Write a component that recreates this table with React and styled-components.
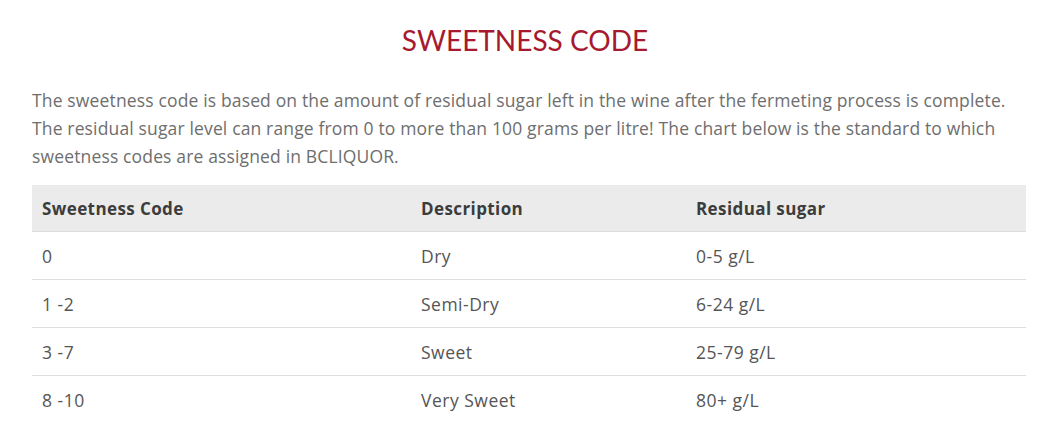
import styled, { createGlobalStyle } from "styled-components";

const GlobalStyle = createGlobalStyle`
  body {
    margin: 0;
    background: #fff;
    font-family: "Open Sans", "Lato", sans-serif;
  }
`;

const rows = [
  { code: "0", desc: "Dry", sugar: "0-5 g/L" },
  { code: "1 -2", desc: "Semi-Dry", sugar: "6-24 g/L" },
  { code: "3 -7", desc: "Sweet", sugar: "25-79 g/L" },
  { code: "8 -10", desc: "Very Sweet", sugar: "80+ g/L" },
];

function App() {
  return (
    <>
      <GlobalStyle />
      <Section>
        <Title>SWEETNESS CODE</Title>
        <Intro>
          The sweetness code is based on the amount of residual sugar left in
          the wine after the fermeting process is complete.
          <br />
          The residual sugar level can range from 0 to more than 100 grams per
          litre! The chart below is the standard to which
          <br />
          sweetness codes are assigned in BCLIQUOR.
        </Intro>
        <Table>
          <colgroup>
            <col style={{ width: 379 }} />
            <col style={{ width: 275 }} />
            <col />
          </colgroup>
          <thead>
            <tr>
              <Th>Sweetness Code</Th>
              <Th>Description</Th>
              <Th>Residual sugar</Th>
            </tr>
          </thead>
          <tbody>
            {rows.map((r, i) => (
              <Row key={r.code} $last={i === rows.length - 1}>
                <Td>{r.code}</Td>
                <Td>{r.desc}</Td>
                <Td>{r.sugar}</Td>
              </Row>
            ))}
          </tbody>
        </Table>
      </Section>
    </>
  );
}

const Section = styled.div`
  padding: 22px 28px 0 32px;
`;

const Title = styled.h2`
  margin: 0 0 28px;
  padding-right: 8px;
  text-align: center;
  font-family: "Lato", sans-serif;
  font-weight: 400;
  font-size: 28px;
  line-height: 36px;
  color: #a6192e;
`;

const Intro = styled.p`
  margin: 0 0 15px;
  font-size: 17.5px;
  letter-spacing: 0.15px;
  line-height: 28px;
  color: #6e6e6e;
  white-space: nowrap;
`;

const Table = styled.table`
  width: 994px;
  border-collapse: collapse;
  table-layout: fixed;
`;

const Th = styled.th`
  background: #ebebeb;
  height: 46px;
  padding: 0 10px;
  text-align: left;
  font-size: 17px;
  letter-spacing: 0.4px;
  font-weight: 700;
  color: #3c3c3c;
  border-bottom: 1px solid #dcdcdc;
`;

const Row = styled.tr`
  border-bottom: ${(p) => (p.$last ? "none" : "1px solid #dedede")};
`;

const Td = styled.td`
  height: 47px;
  padding: 0 10px;
  font-size: 17.5px;
  letter-spacing: 0.5px;
  color: #555;
`;

export default App;
